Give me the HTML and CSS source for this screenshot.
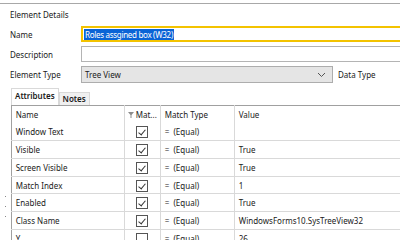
FILE: index.html
```html
<!DOCTYPE html>
<html lang="en">
<head>
  <meta charset="UTF-8" />
  <title>Element Details</title>
  <link rel="stylesheet" href="styles.css">
</head>
<body>
  <div class="panel">
    <div class="title">Element Details</div>
    <div class="form">
      <label>Name</label>
      <div class="field name-field"><span class="selected">Roles assgined box (W32)</span></div>
      <label>Description</label>
      <div class="field desc-field"></div>
      <label>Element Type</label>
      <div class="type-row">
        <div class="select">
          <span>Tree View</span>
          <svg class="chevron" width="9" height="6" viewBox="0 0 9 6"><path d="M1 1 L4.5 4.5 L8 1" fill="none" stroke="#555" stroke-width="1"/></svg>
        </div>
        <span class="data-type">Data Type</span>
      </div>
    </div>

    <div class="tabs">
      <div class="tab active">Attributes</div>
      <div class="tab">Notes</div>
    </div>

    <div class="grid-wrap">
      <div class="grips"><i></i><i></i><i></i></div>
      <table class="grid">
        <colgroup>
          <col class="c-name"><col class="c-match"><col class="c-type"><col>
        </colgroup>
        <thead>
          <tr>
            <th>Name</th>
            <th class="match-h"><svg class="filter" width="6" height="6" viewBox="0 0 6 6"><path d="M0 0 H6 L3.5 3 V6 H2.5 V3 Z" fill="#8c8c8c"/></svg>Mat...</th>
            <th>Match Type</th>
            <th>Value</th>
          </tr>
        </thead>
        <tbody>
          <tr><td>Window Text</td><td class="chk"><span class="box on"></span></td><td>=&nbsp; (Equal)</td><td></td></tr>
          <tr><td>Visible</td><td class="chk"><span class="box on"></span></td><td>=&nbsp; (Equal)</td><td>True</td></tr>
          <tr><td>Screen Visible</td><td class="chk"><span class="box on"></span></td><td>=&nbsp; (Equal)</td><td>True</td></tr>
          <tr><td>Match Index</td><td class="chk"><span class="box on"></span></td><td>=&nbsp; (Equal)</td><td>1</td></tr>
          <tr><td>Enabled</td><td class="chk"><span class="box on"></span></td><td>=&nbsp; (Equal)</td><td>True</td></tr>
          <tr><td>Class Name</td><td class="chk"><span class="box on"></span></td><td>=&nbsp; (Equal)</td><td>WindowsForms10.SysTreeView32</td></tr>
          <tr><td>Y</td><td class="chk"><span class="box"></span></td><td>=&nbsp; (Equal)</td><td>26</td></tr>
        </tbody>
      </table>
    </div>
  </div>
</body>
</html>
```

FILE: styles.css
```css
* {
  box-sizing: border-box;
}
body {
  margin: 0;
  background: #fff;
  font-family: "Noto Sans", "Open Sans", sans-serif;
  font-size: 8px;
  color: #1a1a1a;
  overflow: hidden;
}
.panel {
  margin-top: 3px;
  border-top: 1px solid #a8a8a8;
  width: 420px;
}
.title {
  padding: 5px 0 0 10px;
  height: 22px;
  line-height: 12px;
}
.form {
  display: grid;
  grid-template-columns: 71px 1fr;
  row-gap: 4px;
  align-items: center;
  padding-left: 10px;
}
.field {
  height: 16px;
  border: 1px solid #b4b4b4;
  background: #fff;
}
.name-field {
  border: 1px solid #f3c300;
  box-shadow: inset 0 0 0 1px #f3c300;
  padding: 2px 0 0 2px;
  line-height: 11px;
}
.selected {
  background: #0a64d6;
  color: #fff;
  padding: 0 1px;
  letter-spacing: -0.3px;
}
.type-row {
  display: flex;
  align-items: center;
}
.select {
  width: 252px;
  height: 17px;
  border: 1px solid #adadad;
  background: #e5e5e5;
  display: flex;
  align-items: center;
  justify-content: space-between;
  padding: 0 6px 0 3px;
}
.data-type {
  margin-left: 5px;
}
.tabs {
  display: flex;
  align-items: flex-end;
  margin: 5px 0 0 11px;
  height: 17px;
}
.tab {
  height: 13px;
  padding: 0 3px;
  line-height: 12px;
  border: 1px solid #d9d9d9;
  border-bottom: none;
  background: #f0f0f0;
  font-weight: 600;
}
.tab.active {
  height: 17px;
  line-height: 14px;
  background: #fff;
}
.grid-wrap {
  display: flex;
}
.grips {
  width: 11px;
  display: flex;
  flex-direction: column;
  align-items: center;
  gap: 9px;
  padding-top: 91px;
}
.grips i {
  width: 1px;
  height: 1px;
  background: #888;
}
.grid {
  border-collapse: collapse;
  table-layout: fixed;
  width: 420px;
  border-left: 1px solid #a0a0a0;
  border-top: 1px solid #a0a0a0;
}
.c-name { width: 113px; }
.c-match { width: 36px; }
.c-type { width: 74px; }
th, td {
  height: 17.7px;
  padding: 0 0 0 4px;
  text-align: left;
  font-weight: normal;
  white-space: nowrap;
  overflow: hidden;
  border-bottom: 1px solid #d9d9d9;
  border-right: 1px solid #d9d9d9;
}
thead th {
  border-bottom: none;
}
th {
  vertical-align: middle;
}
.match-h {
  padding-left: 3px;
}
.filter {
  margin-right: 2px;
  vertical-align: 0;
}
.chk {
  text-align: center;
  padding: 0;
}
.box {
  display: inline-block;
  width: 12px;
  height: 12px;
  border: 1px solid #555;
  vertical-align: middle;
  position: relative;
}
.box.on::after {
  content: "";
  position: absolute;
  left: 3px;
  top: 1px;
  width: 3px;
  height: 6px;
  border: solid #333;
  border-width: 0 1px 1px 0;
  transform: rotate(40deg);
}
```
